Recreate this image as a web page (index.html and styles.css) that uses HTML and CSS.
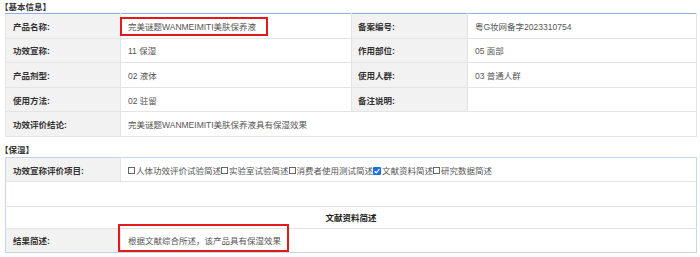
FILE: index.html
```html
<!DOCTYPE html>
<html lang="zh-CN">
  <head>
    <meta charset="UTF-8" />
    <title>化妆品功效宣称信息</title>
    <link rel="stylesheet" href="styles.css">
  </head>
  <body>
    <div class="page">
      <!-- 基本信息 -->
      <div class="group-title">【基本信息】</div>
      <table class="info basic">
        <colgroup>
          <col class="c-label" />
          <col class="c-value" />
          <col class="c-label2" />
          <col />
        </colgroup>
        <tr>
          <th>产品名称:</th>
          <td><span class="mark mark-name">完美谜题WANMEIMITI美肤保养液</span></td>
          <th class="right">备案编号:</th>
          <td>粤G妆网备字2023310754</td>
        </tr>
        <tr>
          <th>功效宣称:</th>
          <td>11 保湿</td>
          <th class="right">作用部位:</th>
          <td>05 面部</td>
        </tr>
        <tr>
          <th>产品剂型:</th>
          <td>02 液体</td>
          <th class="right">使用人群:</th>
          <td>03 普通人群</td>
        </tr>
        <tr>
          <th>使用方法:</th>
          <td>02 驻留</td>
          <th class="right">备注说明:</th>
          <td></td>
        </tr>
        <tr>
          <th>功效评价结论:</th>
          <td colspan="3">完美谜题WANMEIMITI美肤保养液具有保湿效果</td>
        </tr>
      </table>

      <!-- 保湿 -->
      <div class="group-title second">【保湿】</div>
      <table class="info effect">
        <colgroup>
          <col class="c-label" />
          <col />
        </colgroup>
        <tr>
          <th>功效宣称评价项目:</th>
          <td class="checks"><span class="cb"></span>人体功效评价试验简述<span class="cb"></span>实验室试验简述<span class="cb"></span>消费者使用测试简述<span class="cb on"><svg viewBox="0 0 8 8" width="8" height="8"><path d="M1.6 4.2 L3.3 5.8 L6.4 2.2" fill="none" stroke="#fff" stroke-width="1.3"/></svg></span>文献资料简述<span class="cb"></span>研究数据简述</td>
        </tr>
        <tr class="blank">
          <td colspan="2"></td>
        </tr>
        <tr class="sub">
          <td colspan="2" class="sub-title">文献资料简述</td>
        </tr>
        <tr>
          <th>结果简述:</th>
          <td><span class="mark mark-result">根据文献综合所述，该产品具有保湿效果</span></td>
        </tr>
      </table>
    </div>
  </body>
</html>
```

FILE: styles.css
```css
* {
  margin: 0;
  padding: 0;
  box-sizing: border-box;
}

body {
  background-color: #fff;
  font-family: "Liberation Sans", "Noto Sans CJK SC", sans-serif;
  font-size: 8.5px;
  color: #555;
}

.page {
  padding-top: 1px;
}

.group-title {
  font-weight: bold;
  color: #333;
  line-height: 12px;
  height: 12px;
}

.group-title.second {
  margin-top: 7px;
  height: 13px;
  line-height: 13px;
}

table.info {
  margin-left: 5px;
  width: 692px;
  table-layout: fixed;
  border-collapse: collapse;
}

.c-label { width: 115px; }
.c-value { width: 231px; }
.c-label2 { width: 116px; }

.info th,
.info td {
  height: 24.6px;
  padding: 0 7px;
  border: 1px solid #e4e4e4;
  text-align: left;
  vertical-align: middle;
  white-space: nowrap;
}

.info th {
  background-color: #f2f2f2;
  color: #333;
  font-weight: bold;
}

.info th.right {
  padding-left: 6px;
}

/* 基本信息表格顶部蓝线 */
.basic {
  border-top: 1px solid #8db2e2;
}

.basic tr:first-child th,
.basic tr:first-child td {
  border-top: 1px solid #8db2e2;
}

/* 保湿表格外框 */
.effect {
  border: 1px solid #c4d5ec;
}

.effect th,
.effect td {
  height: 24.3px;
}

.effect tr:first-child th,
.effect tr:first-child td {
  border-top: 1px solid #c4d5ec;
}

.effect tr:last-child th,
.effect tr:last-child td {
  border-bottom: 1px solid #c4d5ec;
}

.effect th:first-child,
.effect td:first-child {
  border-left: 1px solid #c4d5ec;
}

.effect tr > :last-child {
  border-right: 1px solid #c4d5ec;
}

.effect tr.sub td {
  height: 22px;
}

.sub-title {
  text-align: center !important;
  font-weight: bold;
  color: #222;
}

/* 复选框 */
.cb {
  display: inline-block;
  width: 7px;
  height: 7px;
  border: 1px solid #666;
  margin-right: 1px;
  vertical-align: 0;
  background: #fff;
}

.cb.on {
  width: 8px;
  height: 8px;
  border: none;
  background-color: #1b6fe0;
  border-radius: 1px;
  vertical-align: -1px;
}

.cb.on svg {
  display: block;
}

/* 红框标注 */
.mark {
  position: relative;
}

.mark::after {
  content: "";
  position: absolute;
  border: 2px solid #e3191b;
}

.mark-name::after {
  left: -8px;
  right: -12px;
  top: -5px;
  bottom: -4px;
}

.mark-result::after {
  left: -10px;
  right: -8px;
  top: -12px;
  bottom: -6px;
}
```
